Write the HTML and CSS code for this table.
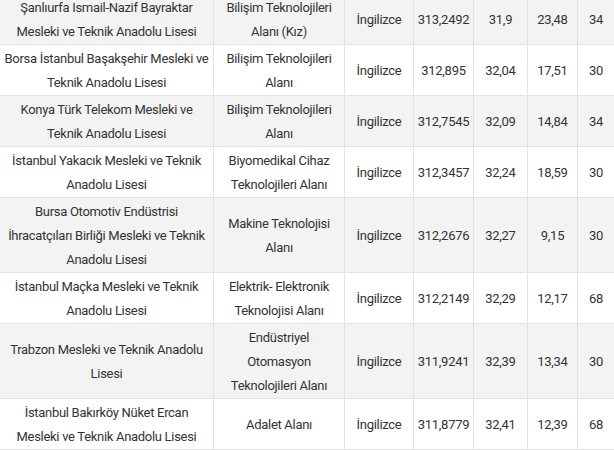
FILE: index.html
```html
<!DOCTYPE html>
<html lang="tr">
<head>
<meta charset="utf-8">
<title>Liseler</title>
<link rel="stylesheet" href="styles.css">
</head>
<body>
<div class="wrap">
<table class="scores">
<colgroup>
<col class="c-school"><col class="c-field"><col class="c-lang"><col class="c-score"><col class="c-pct"><col class="c-obp"><col class="c-quota">
</colgroup>
<tbody>
<tr><td>Şanlıurfa Ismail-Nazif Bayraktar<br>Mesleki ve Teknik Anadolu Lisesi</td><td>Bilişim Teknolojileri<br>Alanı (Kız)</td><td>İngilizce</td><td>313,2492</td><td>31,9</td><td>23,48</td><td>34</td></tr>
<tr><td>Borsa İstanbul Başakşehir Mesleki ve<br>Teknik Anadolu Lisesi</td><td>Bilişim Teknolojileri<br>Alanı</td><td>İngilizce</td><td>312,895</td><td>32,04</td><td>17,51</td><td>30</td></tr>
<tr><td>Konya Türk Telekom Mesleki ve<br>Teknik Anadolu Lisesi</td><td>Bilişim Teknolojileri<br>Alanı</td><td>İngilizce</td><td>312,7545</td><td>32,09</td><td>14,84</td><td>34</td></tr>
<tr><td>İstanbul Yakacık Mesleki ve Teknik<br>Anadolu Lisesi</td><td>Biyomedikal Cihaz<br>Teknolojileri Alanı</td><td>İngilizce</td><td>312,3457</td><td>32,24</td><td>18,59</td><td>30</td></tr>
<tr><td>Bursa Otomotiv Endüstrisi<br>İhracatçıları Birliği Mesleki ve Teknik<br>Anadolu Lisesi</td><td>Makine Teknolojisi<br>Alanı</td><td>İngilizce</td><td>312,2676</td><td>32,27</td><td>9,15</td><td>30</td></tr>
<tr><td>İstanbul Maçka Mesleki ve Teknik<br>Anadolu Lisesi</td><td>Elektrik- Elektronik<br>Teknolojisi Alanı</td><td>İngilizce</td><td>312,2149</td><td>32,29</td><td>12,17</td><td>68</td></tr>
<tr><td>Trabzon Mesleki ve Teknik Anadolu<br>Lisesi</td><td>Endüstriyel<br>Otomasyon<br>Teknolojileri Alanı</td><td>İngilizce</td><td>311,9241</td><td>32,39</td><td>13,34</td><td>30</td></tr>
<tr><td>İstanbul Bakırköy Nüket Ercan<br>Mesleki ve Teknik Anadolu Lisesi</td><td>Adalet Alanı</td><td>İngilizce</td><td>311,8779</td><td>32,41</td><td>12,39</td><td>68</td></tr>
</tbody>
</table>
</div>
</body>
</html>
```

FILE: styles.css
```css
html, body {
  margin: 0;
  padding: 0;
  background: #ffffff;
}
.wrap {
  margin-top: -7px;
  margin-left: -1px;
}
.scores {
  border-collapse: collapse;
  table-layout: fixed;
  width: 615px;
  font-family: Roboto, "Liberation Sans", sans-serif;
  font-size: 13px;
  letter-spacing: -0.3px;
  line-height: 24px;
  color: #333333;
}
.c-school { width: 214px; }
.c-field { width: 131px; }
.c-lang { width: 69px; }
.c-score { width: 60px; }
.c-pct { width: 54px; }
.c-obp { width: 50px; }
.c-quota { width: 37px; }
.scores td {
  border: 1px solid #e3e3e3;
  padding: 2px 1px 0;
  text-align: center;
  vertical-align: middle;
  white-space: nowrap;
}
.scores tr:nth-child(odd) td {
  background: #f3f3f3;
}
```
